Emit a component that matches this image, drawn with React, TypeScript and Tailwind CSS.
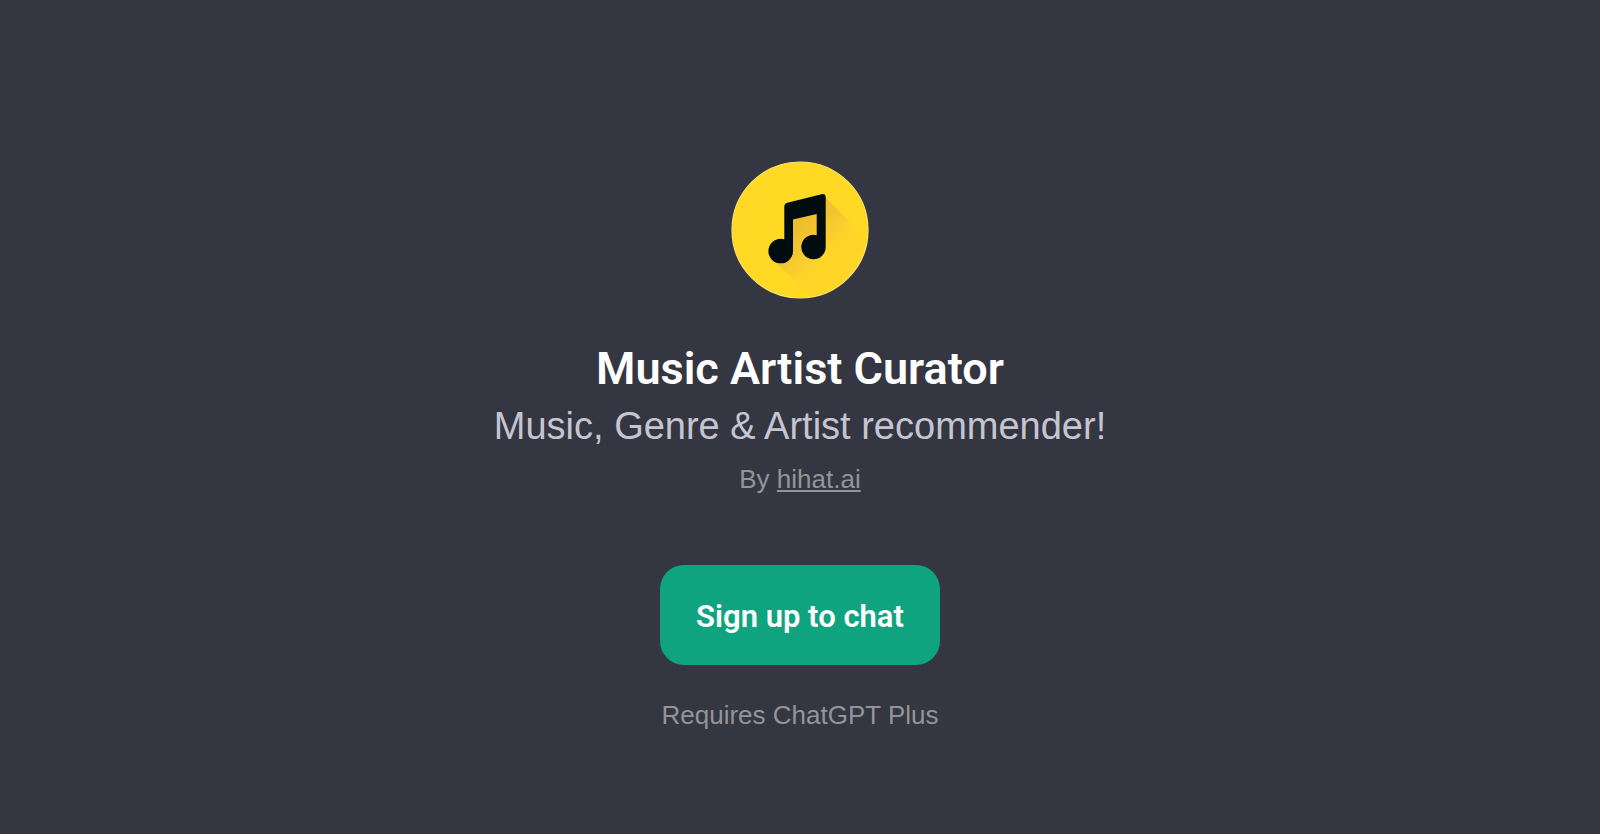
import React from 'react';

function MusicIcon({ className = '' }: { className?: string }) {
  return (
    <svg viewBox="11 11 138 138" className={className} role="img" aria-label="Music Artist Curator logo">
      <defs>
        <linearGradient id="shadow" gradientUnits="userSpaceOnUse" x1="78" y1="78" x2="108" y2="108">
          <stop offset="0" stopColor="#eebd2d" />
          <stop offset="0.4" stopColor="#f4c62f" />
          <stop offset="0.8" stopColor="#fed22e" />
          <stop offset="1" stopColor="#ffd528" />
        </linearGradient>
        <clipPath id="disc">
          <circle cx="80" cy="80" r="68" />
        </clipPath>
      </defs>
      <circle cx="80" cy="80" r="68" fill="#ffd924" />
      <g clipPath="url(#disc)">
        <path d="M73 64L97 58L105 47L160 102V180H127L52 109L72 98Z" fill="url(#shadow)" />
      </g>
      <circle cx="80" cy="80" r="68" fill="none" stroke="#ffe366" strokeWidth="1.2" />
      <path
        d="M64.300 90V56.500Q64.300 53.500 67.300 52.700L101.500 44.200Q105.700 43.400 105.700 47.500V97A12.200 12.200 0 1 1 96.700 85.300V64L73 69.500V101A12.300 12.300 0 1 1 64.300 89.300Z"
        fill="#000c10"
      />
    </svg>
  );
}

export default function App() {
  return (
    <main className="flex min-h-screen flex-col items-center bg-[#343641] px-6 pt-[161px] pb-20 text-center font-['Liberation_Sans',Arial,sans-serif]">
      <MusicIcon className="size-[138px]" />
      <h1 className="mt-10 font-['Roboto',sans-serif] text-[45px] leading-[60px] font-semibold text-white">
        Music Artist Curator
      </h1>
      <p className="text-[38px] leading-[54px] text-[#c5c5d2]">Music, Genre &amp; Artist recommender!</p>
      <p className="mt-1.5 text-[26px] leading-10 text-[#949498]">
        By{' '}
        <a href="#" className="underline decoration-2 underline-offset-2">
          hihat.ai
        </a>
      </p>
      <button
        type="button"
        className="mt-[66px] rounded-3xl bg-[#10a37f] px-9 pt-[34px] pb-[30px] font-['Roboto',sans-serif] text-[31px] leading-9 font-semibold text-white"
      >
        Sign up to chat
      </button>
      <p className="mt-[30px] text-[26px] leading-10 text-[#949498]">Requires ChatGPT Plus</p>
    </main>
  );
}
